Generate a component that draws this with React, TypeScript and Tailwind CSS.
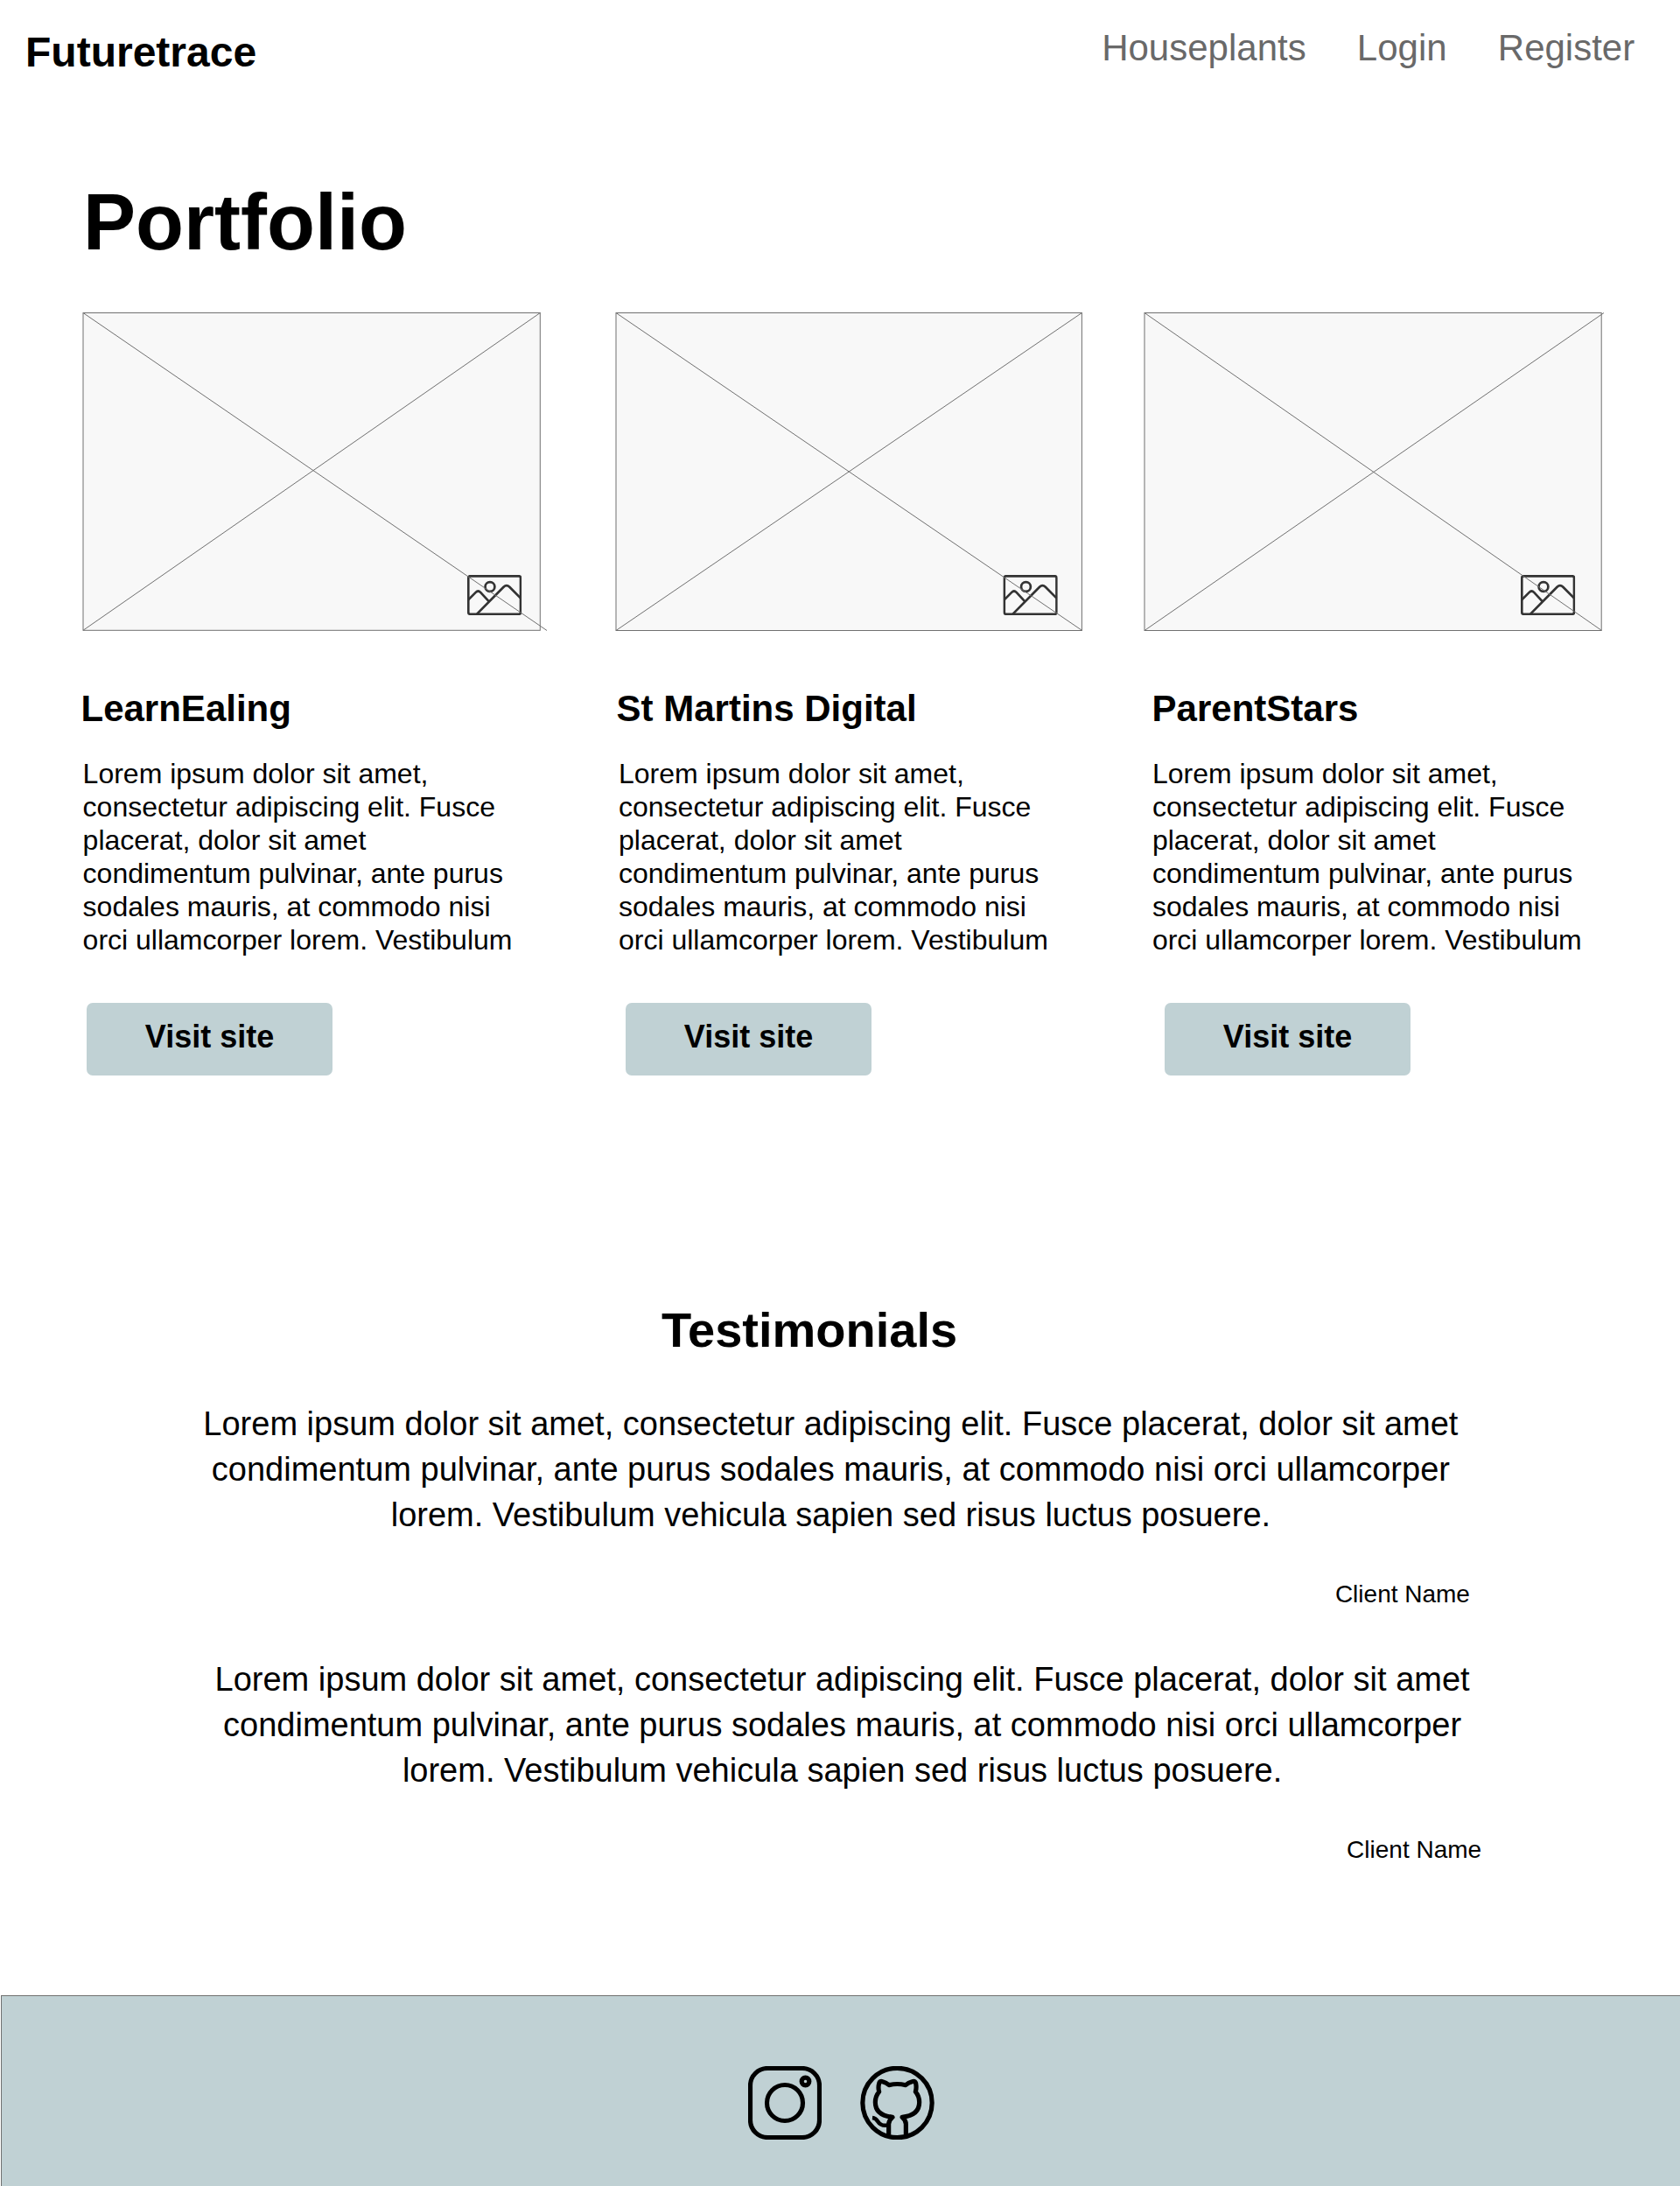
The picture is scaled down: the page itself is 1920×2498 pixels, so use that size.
type Frame = { w: number; h: number; downX: number; downY: number; upX: number; iconX: number };

type Project = {
  title: string;
  column: string;
  frame: Frame;
  frameClass: string;
  titleClass: string;
  textClass: string;
  buttonClass: string;
};

const projects: Project[] = [
  {
    title: "LearnEaling",
    column: "w-[612px]",
    frame: { w: 522.3, h: 362.8, downX: 530, downY: 363.5, upX: 522.3, iconX: 438.9 },
    frameClass: "ml-[3px]",
    titleClass: "ml-[0.5px]",
    textClass: "ml-[2.6px]",
    buttonClass: "ml-[7px]",
  },
  {
    title: "St Martins Digital",
    column: "w-[603px]",
    frame: { w: 532.4, h: 363, downX: 532.4, downY: 363.3, upX: 532.4, iconX: 442.4 },
    frameClass: "",
    titleClass: "ml-[0.6px]",
    textClass: "ml-[3px]",
    buttonClass: "ml-[11px]",
  },
  {
    title: "ParentStars",
    column: "w-[600px]",
    frame: { w: 522.2, h: 363, downX: 522.2, downY: 363.3, upX: 525, iconX: 429.9 },
    frameClass: "ml-[0.5px]",
    titleClass: "ml-[9.6px]",
    textClass: "ml-[9.9px]",
    buttonClass: "ml-[24px]",
  },
];

const blurb =
  "Lorem ipsum dolor sit amet, consectetur adipiscing elit. Fusce placerat, dolor sit amet condimentum pulvinar, ante purus sodales mauris, at commodo nisi orci ullamcorper lorem. Vestibulum";

const quote =
  "Lorem ipsum dolor sit amet, consectetur adipiscing elit. Fusce placerat, dolor sit amet condimentum pulvinar, ante purus sodales mauris, at commodo nisi orci ullamcorper lorem. Vestibulum vehicula sapien sed risus luctus posuere.";

function Placeholder({ frame, className }: { frame: Frame; className: string }) {
  return (
    <svg
      className={`block overflow-visible ${className}`}
      width={frame.w}
      height="364"
      fill="none"
      stroke="#707070"
      strokeWidth="1"
    >
      <rect x="0" y="0.5" width={frame.w} height={frame.h} fill="#f8f8f8" />
      <svg x={frame.iconX} y="299.9" width="62.3" height="46.1" viewBox="103 112 184 136" stroke="#333" strokeWidth="8">
        <rect x="107" y="116" width="176.5" height="128.5" rx="6" />
        <circle cx="180" cy="152" r="16" />
        <path d="M107 196 132 171Q140 163 148 171L176 201" />
        <path d="M136 244 226 153Q236 143 246 153L283 190" />
      </svg>
      <path d={`M0 0.5 ${frame.downX} ${frame.downY}`} />
      <path d={`M${frame.upX} 0.5 0 ${frame.h + 0.5}`} />
    </svg>
  );
}

function InstagramIcon() {
  return (
    <svg width="84" height="84" viewBox="0 0 252 252" fill="none" stroke="#000" strokeWidth="15.5">
      <rect x="7.5" y="7.5" width="237" height="237" rx="59" />
      <circle cx="126" cy="126" r="61.5" />
      <circle cx="196.5" cy="52.5" r="13" />
    </svg>
  );
}

function GithubIcon() {
  return (
    <svg
      width="85"
      height="84"
      viewBox="459 63 255 252"
      fill="none"
      stroke="#000"
      strokeWidth="15.5"
      strokeLinejoin="round"
    >
      <circle cx="586.5" cy="189" r="119" />
      <path d="M557 299V262Q557 249 570 238C530 234 511 216 511 187Q511 166 524 151Q520 138 524 122Q526 113 536 116Q548 119 558 128Q586 121 615 128Q625 119 637 116Q647 113 650 122Q653 138 649 151Q662 166 662 187C662 216 643 234 603 238Q616 249 616 262V299" />
      <path d="M501 240Q512 241 519 252C528 266 538 269 557 265" strokeWidth="13.5" />
    </svg>
  );
}

function Testimonial({ className }: { className: string }) {
  return (
    <figure className={`w-[1440px] ${className}`}>
      <blockquote className="text-center text-[38px] leading-[52px]">{quote}</blockquote>
      <figcaption className="mt-[47px] ml-[1296.5px] text-[28px] leading-[36px] whitespace-nowrap">
        Client Name
      </figcaption>
    </figure>
  );
}

export default function App() {
  return (
    <div className="flex h-[2498px] w-[1920px] flex-col overflow-hidden bg-white font-['Liberation_Sans',Arial,sans-serif] text-black">
      <header className="flex h-[209px] items-start justify-between pr-[51.8px] pl-[29px]">
        <div className="mt-[36px] text-5xl leading-[48px] font-bold">Futuretrace</div>
        <nav className="mt-[31px] flex gap-[58.2px] text-[42px] leading-[48px] text-[#696969]">
          <a>Houseplants</a>
          <a>Login</a>
          <a>Register</a>
        </nav>
      </header>

      <main className="flex-1">
        <section>
          <h1 className="ml-[95px] text-[90px] leading-[90px] font-bold">Portfolio</h1>
          <div className="mt-[58px] flex pl-[92px]">
            {projects.map((p) => (
              <article key={p.title} className={`shrink-0 ${p.column}`}>
                <Placeholder frame={p.frame} className={p.frameClass} />
                <h2 className={`mt-[65px] text-[42px] leading-[48px] font-bold ${p.titleClass}`}>{p.title}</h2>
                <p className={`mt-[31px] w-[506px] text-[32px] leading-[38px] ${p.textClass}`}>{blurb}</p>
                <button
                  className={`mt-[53px] flex h-[83px] w-[281px] items-start justify-center rounded-[7px] bg-[#c0d1d4] pt-[21px] text-4xl leading-[36px] font-bold ${p.buttonClass}`}
                >
                  Visit site
                </button>
              </article>
            ))}
          </div>
        </section>

        <section className="mt-[263px]">
          <h2 className="ml-[756px] text-[56px] leading-[56px] font-bold">Testimonials</h2>
          <Testimonial className="mt-[53px] ml-[229.4px]" />
          <Testimonial className="mt-[53px] ml-[242.6px]" />
        </section>
      </main>

      <footer className="ml-px flex h-[218px] items-start gap-[44px] border-t border-l border-[#707070] bg-[#c0d1d4] pt-[80px] pl-[853px]">
        <InstagramIcon />
        <GithubIcon />
      </footer>
    </div>
  );
}
